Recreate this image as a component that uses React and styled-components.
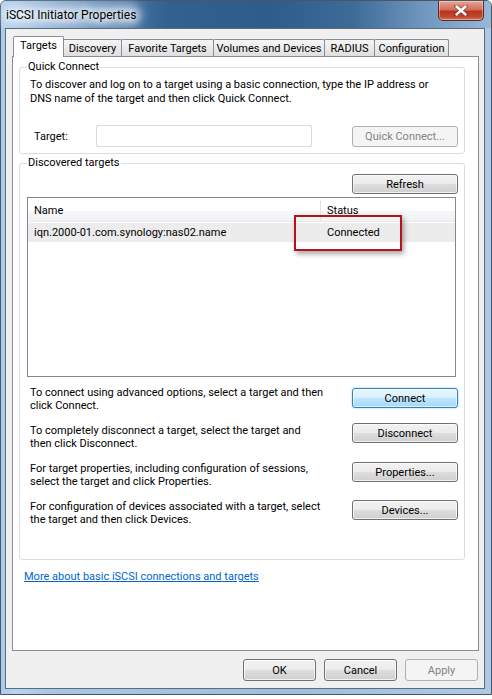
import React from 'react';
import styled, { createGlobalStyle, css } from 'styled-components';

const GlobalStyle = createGlobalStyle`
  html, body {
    margin: 0;
    background: #ffffff;
  }
  body {
    font-family: Roboto, "Liberation Sans", Arial, sans-serif;
    font-size: 11px;
    color: #000;
  }
`

/**
 * Window chrome
 */

const Window = styled.div`
    width: 492px;
    height: 695px;
    box-sizing: border-box;
    display: flex;
    flex-direction: column;
    padding: 0 6px 5px 4px;
    border: 1px solid #4a5566;
    border-radius: 6px 6px 0 0;
    background: linear-gradient(90deg, #a9cbeb 0%, #b6d4f0 3%, #a8c6e4 10%, #9fbedf 60%, #adc9e6 100%);
    box-shadow: 0 3px 4px rgba(0,0,0,.25);
`

const TitleBar = styled.div`
    height: 27px;
    margin: 0 -6px 0 -4px;
    padding: 0 6px 0 5px;
    display: flex;
    align-items: flex-start;
    justify-content: space-between;
    background: linear-gradient(90deg, #b4d1ee 0%, #92b5d9 8%, #5582b2 20%, #33618f 34%, #2e5c8b 55%, #3e6b98 72%, #6f96be 86%, #98b8d8 100%);
    border-radius: 5px 5px 0 0;
`

const Title = styled.span`
    margin-top: 7px;
    font-size: 12px;
    color: #000;
    text-shadow: 0 0 6px #fff, 0 0 8px #fff, 0 0 10px #eef4fb;
    background: rgba(225, 236, 247, .5);
    box-shadow: 0 0 10px 6px rgba(225, 236, 247, .5);
    border-radius: 8px;
    line-height: 14px;
`

const CloseButton = styled.div`
    width: 46px;
    height: 20px;
    margin-right: 1px;
    box-sizing: border-box;
    display: flex;
    align-items: center;
    justify-content: center;
    border: 1px solid #5d2a24;
    border-top: none;
    border-radius: 0 0 5px 5px;
    background: linear-gradient(180deg, #e8a493 0%, #d0705b 45%, #b9341c 55%, #c34a2f 85%, #d77c5e 100%);
    box-shadow: inset 0 0 0 1px rgba(255,255,255,.35);
`

const Client = styled.div`
    flex: 1;
    display: flex;
    flex-direction: column;
    padding: 7px 5px 7px 6px;
    background: #f0f0f0;
    border: 1px solid #5d6b7b;
`

/**
 * Tabs
 */

const TabRow = styled.div`
    display: flex;
    align-items: flex-end;
    height: 20px;
    margin-left: 1px;
`

const Tab = styled.div`
    width: ${({ w }) => w}px;
    height: 17px;
    box-sizing: border-box;
    margin-left: -1px;
    display: flex;
    align-items: center;
    justify-content: center;
    border: 1px solid #898c95;
    border-bottom: none;
    border-radius: 2px 2px 0 0;
    background: linear-gradient(180deg, #f5f5f5 0%, #ebebeb 50%, #dedede 100%);
    color: #000;
    ${({ active }) => active && css`
        height: 21px;
        margin-bottom: -1px;
        margin-left: 0;
        padding-bottom: 3px;
        background: #ffffff;
        position: relative;
        z-index: 1;
    `}
`

const Panel = styled.div`
    flex: 1;
    display: flex;
    flex-direction: column;
    padding: 3px 13px 0 6px;
    background: #ffffff;
    border: 1px solid #898c95;
`

/**
 * Group boxes
 */

const GroupBox = styled.fieldset`
    margin: ${({ spacing }) => spacing || 0}px 0 0 0;
    padding: 0 6px ${({ bottom }) => bottom}px 7px;
    border: 1px solid #d5dfe5;
    border-radius: 3px;
    min-width: 0;
`

const Legend = styled.legend`
    padding: 0 1px;
    margin-left: 0;
    line-height: 14px;
    font-size: 11px;
`

const Paragraph = styled.div`
    margin-top: 4px;
    padding-left: 3px;
    line-height: 14px;
    white-space: nowrap;
`

const TargetRow = styled.div`
    display: flex;
    align-items: center;
    margin-top: 19px;
    height: 22px;
`

const FieldLabel = styled.label`
    width: 69px;
    padding-left: 7px;
    box-sizing: border-box;
`

const TextInput = styled.div`
    width: 216px;
    height: 22px;
    box-sizing: border-box;
    border: 1px solid #dadada;
    border-radius: 2px;
    background: #fff;
`

const Spacer = styled.div`
    flex: 1;
`

const Button = styled.div`
    width: ${({ w }) => w || 106}px;
    height: ${({ h }) => h || 21}px;
    box-sizing: border-box;
    display: flex;
    align-items: center;
    justify-content: center;
    border: 1px solid #707070;
    border-radius: 3px;
    background: linear-gradient(180deg, #f2f2f2 0%, #ebebeb 48%, #dddddd 52%, #cfcfcf 100%);
    box-shadow: inset 0 0 0 1px rgba(255,255,255,.7);
    color: #000;
    flex-shrink: 0;
    ${({ disabled }) => disabled && css`
        border-color: #adb2b5;
        background: #f4f4f4;
        box-shadow: none;
        color: #838383;
    `}
    ${({ primary }) => primary && css`
        border-color: #3c7fb1;
        background: linear-gradient(180deg, #eaf6fd 0%, #d9f0fc 48%, #bee6fd 52%, #a7d9f5 100%);
        box-shadow: inset 0 0 0 1px rgba(255,255,255,.6), 0 0 2px #6ac8f0;
    `}
`

const RefreshRow = styled.div`
    display: flex;
    justify-content: flex-end;
    margin-top: 4px;
`

/**
 * List view
 */

const ListView = styled.div`
    position: relative;
    width: 429px;
    height: 180px;
    box-sizing: border-box;
    margin-top: 3px;
    border: 1px solid #828790;
    background: #fff;
`

const ListHeader = styled.div`
    display: flex;
    height: 21px;
    margin-top: 2px;
    background: linear-gradient(180deg, #ffffff 0%, #ffffff 50%, #f6f7f8 51%, #f1f2f4 100%);
    border-bottom: 1px solid #e6e8ec;
`

const Column = styled.div`
    width: ${({ w }) => w}px;
    display: flex;
    align-items: center;
    padding-left: 6px;
    box-sizing: border-box;
    ${({ divider }) => divider && css`
        border-right: 1px solid #e3e4e6;
    `}
`

const ListRow = styled.div`
    display: flex;
    height: 19px;
    margin-top: 1px;
    background: ${({ selected }) => selected ? '#ececec' : 'transparent'};
`

const Callout = styled.div`
    position: absolute;
    left: 266px;
    top: 17px;
    width: 108px;
    height: 36px;
    box-sizing: border-box;
    border: 2px solid #b5121b;
    box-shadow: 2px 3px 5px rgba(0,0,0,.35);
`

/**
 * Actions
 */

const ActionList = styled.div`
    display: flex;
    flex-direction: column;
    margin-top: 9px;
    gap: 11px;
`

const ActionRow = styled.div`
    display: flex;
    align-items: flex-start;
    justify-content: space-between;
    height: 27px;
    padding-left: 3px;
`

const ActionText = styled.div`
    line-height: 13px;
    white-space: nowrap;
`

const ActionButtonWrap = styled.div`
    margin-top: ${({ offset }) => offset}px;
`

const HelpLink = styled.a`
    display: inline-block;
    margin: 10px 0 0 5px;
    color: #0066cc;
    text-decoration: underline;
    line-height: 14px;
    align-self: flex-start;
`

const Footer = styled.div`
    display: flex;
    justify-content: flex-end;
    gap: 8px;
    margin-top: 8px;
    padding-right: 1px;
`

const tabs = [
    { label: 'Targets', w: 51, active: true },
    { label: 'Discovery', w: 59 },
    { label: 'Favorite Targets', w: 93 },
    { label: 'Volumes and Devices', w: 112 },
    { label: 'RADIUS', w: 51 },
    { label: 'Configuration', w: 75 },
]

const actions = [
    { lines: ['To connect using advanced options, select a target and then', 'click Connect.'], button: 'Connect', primary: true, offset: 2 },
    { lines: ['To completely disconnect a target, select the target and', 'then click Disconnect.'], button: 'Disconnect', offset: -1 },
    { lines: ['For target properties, including configuration of sessions,', 'select the target and click Properties.'], button: 'Properties...', offset: 0 },
    { lines: ['For configuration of devices associated with a target, select', 'the target and then click Devices.'], button: 'Devices...', offset: 0 },
]

const CloseIcon = () => (
    <svg width="14" height="11" viewBox="0 0 14 11">
        <path d="M2 1 L12 10 M12 1 L2 10" stroke="#4a1a12" strokeWidth="4" strokeLinecap="round" opacity=".45" />
        <path d="M2.5 1.5 L11.5 9.5 M11.5 1.5 L2.5 9.5" stroke="#ffffff" strokeWidth="2.4" strokeLinecap="round" />
    </svg>
)

export default function App() {
    return (
        <>
            <GlobalStyle />
            <Window>
                <TitleBar>
                    <Title>iSCSI Initiator Properties</Title>
                    <CloseButton><CloseIcon /></CloseButton>
                </TitleBar>
                <Client>
                    <TabRow>
                        {tabs.map(({ label, w, active }) => (
                            <Tab key={label} w={w} active={active}>{label}</Tab>
                        ))}
                    </TabRow>
                    <Panel>
                        <GroupBox bottom={6}>
                            <Legend>Quick Connect</Legend>
                            <Paragraph>
                                To discover and log on to a target using a basic connection, type the IP address or<br />
                                DNS name of the target and then click Quick Connect.
                            </Paragraph>
                            <TargetRow>
                                <FieldLabel>Target:</FieldLabel>
                                <TextInput />
                                <Spacer />
                                <Button disabled>Quick Connect...</Button>
                            </TargetRow>
                        </GroupBox>

                        <GroupBox spacing={2} bottom={32}>
                            <Legend>Discovered targets</Legend>
                            <RefreshRow>
                                <Button h={20}>Refresh</Button>
                            </RefreshRow>
                            <ListView>
                                <ListHeader>
                                    <Column w={293} divider>Name</Column>
                                    <Column w={120}>Status</Column>
                                </ListHeader>
                                <ListRow selected>
                                    <Column w={293}>iqn.2000-01.com.synology:nas02.name</Column>
                                    <Column w={120}>Connected</Column>
                                </ListRow>
                                <Callout />
                            </ListView>
                            <ActionList>
                                {actions.map(({ lines, button, primary, offset }) => (
                                    <ActionRow key={button}>
                                        <ActionText>{lines[0]}<br />{lines[1]}</ActionText>
                                        <ActionButtonWrap offset={offset}>
                                            <Button h={20} primary={primary}>{button}</Button>
                                        </ActionButtonWrap>
                                    </ActionRow>
                                ))}
                            </ActionList>
                        </GroupBox>

                        <HelpLink href="#">More about basic iSCSI connections and targets</HelpLink>
                    </Panel>
                    <Footer>
                        <Button w={73} h={22}>OK</Button>
                        <Button w={73} h={22}>Cancel</Button>
                        <Button w={73} h={22} disabled>Apply</Button>
                    </Footer>
                </Client>
            </Window>
        </>
    )
}
